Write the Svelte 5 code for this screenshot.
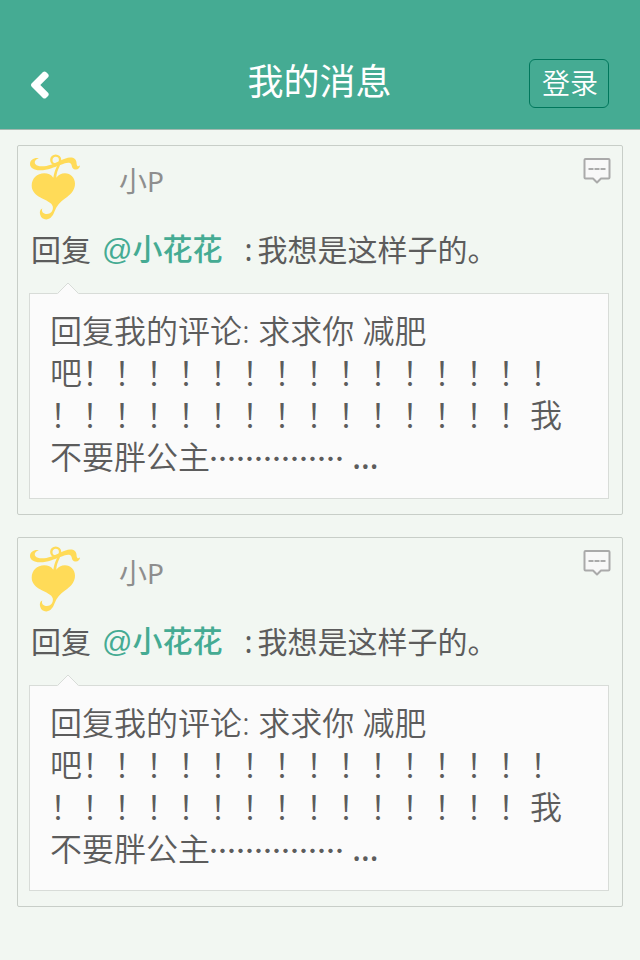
<script>
  const bangs = '\uFF01'.repeat(15);
  const quote = `回复我的评论: 求求你 减肥\n吧${bangs}\n${bangs}我\n不要胖公主`;
  const messages = [
    { id: 1, name: '小P', to: '@小花花', text: '我想是这样子的。', quote },
    { id: 2, name: '小P', to: '@小花花', text: '我想是这样子的。', quote }
  ];
</script>

<div class="page" lang="zh-CN">
  <header>
    <button class="back" aria-label="返回">
      <svg width="20" height="30" viewBox="0 0 20 30" aria-hidden="true">
        <path d="M1.500 13.500L13 2Q14.500 0.800 16 2L18.300 4.300Q19.300 5.700 18.300 7L10.300 15L18.300 23Q19.300 24.300 18.300 25.700L16 28Q14.500 29.200 13 28L1.500 16.500Q0.300 15 1.500 13.500Z" fill="#fff" />
      </svg>
    </button>
    <h1>我的消息</h1>
    <button class="login">登录</button>
  </header>

  <main>
    {#each messages as m (m.id)}
      <article>
        <div class="top">
          <svg class="avatar" width="50" height="66" viewBox="0 0 50 66" aria-hidden="true">
            <path fill="#ffdb58" d="M23.300 23.700C21 20.500 18 19.300 14.300 19.300C7 19.300 1.700 24.500 1.700 31.700C1.700 36.500 5 40.500 10 43.200C16 46.500 22 48.500 22.800 52.500C23.500 57 20.500 60 17 60C13 60 11.200 57.500 12.300 54.500C9.800 55.500 9.500 58.500 10.300 61C11.200 64 13.500 65.600 16.500 65.400C21 65 23.200 61 24.500 57.500C26.500 52 30.500 47.500 35 44.500C41 40.500 45 36 45 29.800C45 23.500 40.500 19.300 35 19.300C31 19.300 28.500 21 26.300 23.800C26.300 19.500 28 15.500 30 11.200L28 10.500C25.500 14.500 24 19 23.300 23.700Z" />
            <path fill="#ffdb58" d="M8.800 4.200C4 3.400 0 6 0 10C0 14 4.500 16.500 10 16.300C18 16 24 13.300 31 10.700C35 9.200 38 8 40.300 9.200C42.500 10.500 41 13.500 44 15.200C47 16.500 50 14.500 50 11.300C48.500 13 46.700 12.600 46.600 9.500C46.500 5.500 44 3.500 40 3.600C34 3.800 28.500 8.500 21 10.700C16 12.300 8 13.500 5.500 10.300C3.800 7.800 5.500 5.200 8.800 4.200Z" />
            <circle cx="25.700" cy="6" r="4.400" fill="none" stroke="#ffdb58" stroke-width="2.400" />
          </svg>
          <span class="name">{m.name}</span>
          <button class="comment" aria-label="评论">
            <svg width="28" height="28" viewBox="0 0 28 28" aria-hidden="true">
              <path d="M2.500 2h23q1 0 1 1v17.500q0 1-1 1h-7.500l-4 4-4-4h-7.500q-1 0-1-1V3q0-1 1-1z" fill="#f8f8f8" stroke="#aaa" stroke-width="2" stroke-linejoin="round" />
              <path d="M5.500 12h5m1 0h5m1 0h5" stroke="#aaa" stroke-width="2" />
            </svg>
          </button>
        </div>
        <p class="reply"><span>回复</span><a href="#user">{m.to}</a><span>:</span><span class="said">{m.text}</span></p>
        <blockquote>
          <svg class="notch" width="22" height="12" viewBox="0 0 22 12" aria-hidden="true">
            <path d="M0 12V11.500H1L11 1L21 11.500H22V12z" fill="#fbfbfb" />
            <path d="M0.500 11.500L11 1L21.500 11.500" fill="none" stroke="#d8dcd8" />
          </svg>
          {m.quote}<span class="dots">……………</span> <span class="more">...</span>
        </blockquote>
      </article>
    {/each}
  </main>
</div>

<style>
  :global(body) {
    background: #f2f7f2;
  }
  .page {
    font-family: 'Noto Sans', 'Noto Sans CJK SC', sans-serif;
    color: #5c5c5c;
  }
  button {
    padding: 0;
    border: 0;
    background: none;
    color: inherit;
    font-family: inherit;
    cursor: pointer;
  }
  svg {
    display: block;
  }
  header {
    display: grid;
    grid-template-columns: 1fr auto 1fr;
    align-items: center;
    padding: 37px 31px 0 30px;
    height: 92px;
    background: #45ab93;
    border-bottom: 1px solid #a3b9b0;
    color: #fff;
  }
  .back {
    justify-self: start;
    padding-top: 4px;
  }
  h1 {
    margin: 0;
    padding-bottom: 2px;
    font-size: 36px;
    font-weight: 400;
    line-height: 48px;
  }
  .login {
    justify-self: end;
    box-sizing: border-box;
    width: 80px;
    height: 49px;
    padding-left: 2px;
    border: 1px solid #00775c;
    border-radius: 6px;
    font-size: 28px;
    font-weight: 350;
    line-height: 46px;
  }
  main {
    display: flex;
    flex-direction: column;
    gap: 22px;
    padding: 15px 17px 52px;
  }
  article {
    padding: 8px 13px 15px 11px;
    border: 1px solid #c8cec8;
    border-radius: 2px;
  }
  .top {
    display: flex;
    align-items: flex-start;
  }
  .avatar {
    margin-left: 1px;
  }
  .name {
    flex: 1;
    padding-left: 39px;
    font-size: 28px;
    line-height: 54px;
    color: #8e8e8e;
  }
  .comment {
    margin-top: 3px;
    margin-right: -2px;
  }
  .reply {
    display: flex;
    height: 44px;
    margin: 8px 0 0;
    padding-left: 2px;
    font-size: 30px;
    line-height: 44px;
  }
  .reply a {
    margin: 0 22px 0 11px;
    color: #45ab93;
    font-family: 'Liberation Sans', 'Noto Sans CJK SC', sans-serif;
    font-weight: 500;
    text-decoration: none;
  }
  .said {
    margin-left: 5px;
  }
  blockquote {
    position: relative;
    margin: 21px 0 0;
    padding: 16px 20px 20px;
    border: 1px solid #d8dcd8;
    background: #fbfbfb;
    font-size: 32px;
    font-weight: 350;
    line-height: 42px;
    white-space: pre-line;
  }
  .notch {
    position: absolute;
    left: 27px;
    top: -12px;
  }
  .dots {
    margin-left: -1px;
    font-family: 'Noto Sans CJK SC', sans-serif;
    font-size: 27px;
    font-weight: 700;
    line-height: 1;
  }
  .more {
    font-weight: 500;
  }
</style>
